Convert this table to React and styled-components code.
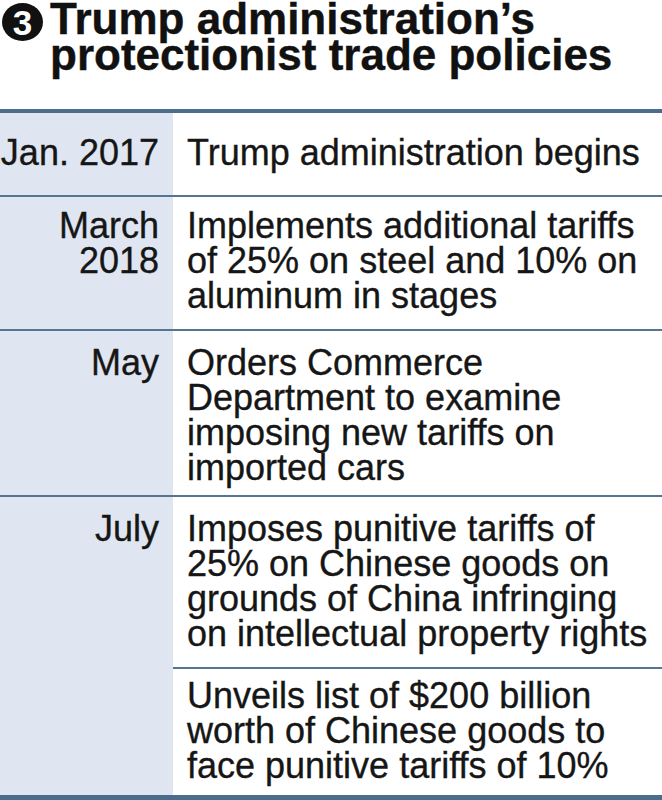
import React from 'react';
import styled, { createGlobalStyle } from 'styled-components';

const GlobalStyle = createGlobalStyle`
  html, body {
    margin: 0;
    padding: 0;
    background: #ffffff;
  }
  body {
    font-family: "Liberation Sans", Arial, Helvetica, sans-serif;
    color: #161616;
  }
`;

const rows = [
    { date: ['Jan. 2017'], events: [
        { lines: ['Trump administration begins'], pt: 22, pb: 25 },
    ]},
    { date: ['March', '2018'], events: [
        { lines: ['Implements additional tariffs', 'of 25% on steel and 10% on', 'aluminum in stages'], pt: 11, pb: 16 },
    ]},
    { date: ['May'], events: [
        { lines: ['Orders Commerce', 'Department to examine', 'imposing new tariffs on', 'imported cars'], pt: 14, pb: 10 },
    ]},
    { date: ['July'], events: [
        { lines: ['Imposes punitive tariffs of', '25% on Chinese goods on', 'grounds of China infringing', 'on intellectual property rights'], pt: 14, pb: 16 },
        { lines: ['Unveils list of $200 billion', 'worth of Chinese goods to', 'face punitive tariffs of 10%'], pt: 9, pb: 12 },
    ]},
];

function App() {
    return (
        <Page>
            <GlobalStyle />
            <Heading>
                <Badge>3</Badge>
                <HeadingText>
                    <Line>Trump administration’s</Line>
                    <Line>protectionist trade policies</Line>
                </HeadingText>
            </Heading>
            <Table>
                {rows.map((row, i) => (
                    <Row key={i} first={i === 0}>
                        <DateCell pt={row.events[0].pt}>
                            {row.date.map(d => <Line key={d}>{d}</Line>)}
                        </DateCell>
                        <Events>
                            {row.events.map((ev, j) => (
                                <EventCell key={j} divided={j > 0} pt={ev.pt} pb={ev.pb}>
                                    {ev.lines.map(l => <Line key={l}>{l}</Line>)}
                                </EventCell>
                            ))}
                        </Events>
                    </Row>
                ))}
            </Table>
        </Page>
    );
}

const Page = styled.div`
  width: 662px;
  height: 800px;
  overflow: hidden;
  display: flex;
  flex-direction: column;
`;

const Heading = styled.div`
  display: flex;
  align-items: flex-start;
  height: 109px;
  padding-left: 2px;
  box-sizing: border-box;
`;

const Badge = styled.span`
  flex: none;
  width: 41px;
  height: 38px;
  margin-top: 3px;
  margin-right: 7px;
  border-radius: 50%;
  background: #111111;
  color: #ffffff;
  font-weight: 700;
  font-size: 35px;
  line-height: 39px;
  text-align: center;
`;

const HeadingText = styled.div`
  font-weight: 700;
  font-size: 44px;
  line-height: 36px;
  color: #111111;
  margin-top: 1px;
  -webkit-text-stroke: 0.4px #111111;
`;

const Line = styled.span`
  display: block;
  white-space: nowrap;
`;

const Table = styled.div`
  border-top: 4px solid #4c6c8c;
  border-bottom: 5px solid #4c6c8c;
  font-size: 36px;
  line-height: 35px;
  -webkit-text-stroke: 0.35px #161616;
`;

const Row = styled.div`
  display: grid;
  grid-template-columns: 173px 1fr;
  border-top: ${p => (p.first ? 'none' : '2px solid #56758f')};
`;

const DateCell = styled.div`
  background: #dfe6f1;
  text-align: right;
  padding: ${p => p.pt}px 14px 0 0;
`;

const Events = styled.div`
  display: flex;
  flex-direction: column;
`;

const EventCell = styled.div`
  padding: ${p => p.pt}px 0 ${p => p.pb}px 14px;
  border-top: ${p => (p.divided ? '2px solid #56758f' : 'none')};
`;

export default App;
